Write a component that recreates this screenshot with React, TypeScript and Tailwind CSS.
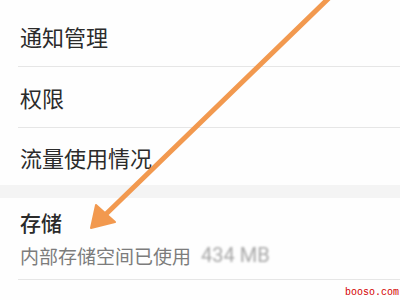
import { ChevronRight } from "lucide-react";

const cjk = { fontFamily: '"Noto Sans CJK SC", "Noto Sans", sans-serif' };

// simple settings row
const Row = ({ title, height }: { title: string; height: string }) => (
  <div className={`flex items-center justify-between pl-5 ${height}`}>
    <span className="text-[22px] leading-none text-[#2b2b2b]">{title}</span>
    <ChevronRight className="-mr-[14px] h-5 w-5 text-[#ececec]" strokeWidth={2} />
  </div>
);

const Divider = () => <div className="ml-[18px] h-px bg-[#e6e6e6]" />;

export default function App() {
  return (
    <div className="relative h-[300px] w-[400px] overflow-hidden bg-[#fefefe]" style={cjk}>
      <div className="pt-[6px]">
        <Row title="通知管理" height="h-[60px]" />
        <Divider />
        <Row title="权限" height="h-[60px]" />
        <Divider />
        <Row title="流量使用情况" height="h-[57px]" />
      </div>

      {/* section gap */}
      <div className="h-[13px] bg-[#f4f4f4]" />

      <div className="flex h-[81px] items-center justify-between pl-5">
        <div className="flex flex-col gap-[12px]">
          <span className="text-[21px] font-medium leading-none text-[#2b2b2b]">存储</span>
          <div className="flex items-center gap-[10px] text-[19px] leading-none">
            <span className="text-[#7c7c7c]">内部存储空间已使用</span>
            <span className="text-[20px] text-[#a8a8a8] blur-[0.8px]" style={{ fontFamily: '"Roboto", "Liberation Sans", sans-serif' }}>
              434 MB
            </span>
          </div>
        </div>
        <ChevronRight className="-mr-[14px] h-5 w-5 text-[#ececec]" strokeWidth={2} />
      </div>
      <Divider />
      <div className="flex h-[60px] items-start pl-5 pt-[20px]">
        <span className="text-[22px] leading-none text-[#2b2b2b]">应用</span>
      </div>

      {/* annotation arrow */}
      <svg className="pointer-events-none absolute inset-0" width="400" height="300" viewBox="0 0 400 300">
        <line x1="330" y1="-3" x2="103" y2="217" stroke="#f2994f" strokeWidth="5" strokeLinecap="round" />
        <polygon points="91,228 96,205 115,222" fill="#f2994f" stroke="#f2994f" strokeWidth="2" strokeLinejoin="round" />
      </svg>

      {/* watermark */}
      <span
        className="absolute bottom-[2px] right-[1px] text-[10px] leading-none text-[#d40000]"
        style={{ fontFamily: '"Liberation Mono", monospace' }}
      >
        booso.com
      </span>
    </div>
  );
}
